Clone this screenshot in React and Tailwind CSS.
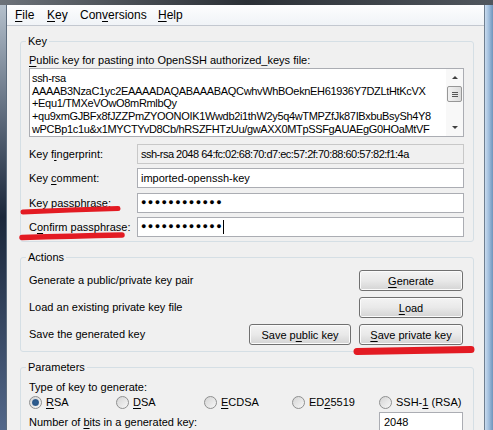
import React from 'react';

const U = ({ children }) => (
  <span className="underline decoration-[1px] underline-offset-[2px]">{children}</span>
);

const Btn = ({ className = '', children }) => (
  <button
    type="button"
    className={`h-[21px] rounded-[3px] border border-[#707070] bg-gradient-to-b from-[#f3f3f3] via-[#e9e9e9] to-[#d4d4d4] shadow-[inset_0_0_0_1px_#fbfbfb] text-[11px] leading-[14px] text-black ${className}`}
  >
    {children}
  </button>
);

const Radio = ({ checked, children }) => (
  <div className="flex items-center gap-[4px] h-[14px]">
    <span className="w-[13px] h-[13px] rounded-full border border-[#8e8f8f] bg-gradient-to-br from-[#d4d4d4] to-[#f7f7f7] flex items-center justify-center">
      {checked && (
        <span className="w-[7px] h-[7px] rounded-full bg-[radial-gradient(circle,#2d5f93_0%,#2a5585_55%,#7ea8d4_100%)]" />
      )}
    </span>
    <span>{children}</span>
  </div>
);

const Field = ({ label, children, className = '' }) => (
  <div className="flex items-center h-[20px]">
    <div className="w-[108px] shrink-0 leading-[14px]">{label}</div>
    <div className={`flex-1 h-[20px] border border-[#abadb3] flex items-center pl-[3px] whitespace-nowrap overflow-hidden ${className}`}>
      {children}
    </div>
  </div>
);

const keyLines = [
  'ssh-rsa',
  'AAAAB3NzaC1yc2EAAAADAQABAAABAQCwhvWhBOeknEH61936Y7DZLtHtKcVX',
  '+Equ1/TMXeVOwO8mRmlbQy',
  '+qu9xmGJBFx8fJZZPmZYOONOIK1Wwdb2i1thW2y5q4wTMPZfJk87IBxbuBsySh4Y8',
  'wPCBp1c1u&x1MYCTYvD8Cb/hRSZFHTzUu/gwAXX0MTpSSFgAUAEgG0HOaMtVF',
];

const dots = '\u25CF'.repeat(12);

export default function App() {
  return (
    <div className="relative w-[493px] h-[430px] overflow-hidden bg-[#f0f0f0] text-[11px] text-black font-['Liberation_Sans',Arial,sans-serif]">
      {/* window frame top */}
      <div className="h-[5px] bg-gradient-to-r from-[#6c7279] via-[#2b3036] to-[#50565d]" />
      <div className="flex h-[425px]">
        {/* left frame */}
        <div className="w-[7px] shrink-0 bg-gradient-to-b from-[#b4c0cc] via-[#1b273a] to-[#53688a] border-r border-[#5d6c7d]" />

        <div className="flex-1 flex flex-col min-w-0">
          {/* menu bar */}
          <div className="h-[21px] shrink-0 flex items-center pl-[8px] text-[12px] bg-gradient-to-b from-[#fdfdfe] to-[#f0f3f7] border-b border-[#c3c8d0]">
            <span className="w-[32px]"><U>F</U>ile</span>
            <span className="w-[33px]"><U>K</U>ey</span>
            <span className="w-[78px]">Con<U>v</U>ersions</span>
            <span><U>H</U>elp</span>
          </div>

          {/* Key group */}
          <fieldset className="ml-[13px] mr-[10px] mt-[8px] border border-[#d5dfe5] rounded-[3px] pl-[8px] pr-[9px] pb-[4px]">
            <legend className="-ml-[3px] px-[2px] leading-[14px]">Key</legend>
            <div className="mt-[5px] leading-[14px]">
              <U>P</U>ublic key for pasting into OpenSSH authorized_keys file:
            </div>
            <div className="mt-[1px] h-[69px] border border-[#abadb3] bg-white flex">
              <div className="flex-1 pl-[2px] pt-[3px] leading-[12.7px] tracking-[-0.33px] overflow-hidden whitespace-nowrap">
                {keyLines.map((l) => (
                  <div key={l}>{l}</div>
                ))}
              </div>
              {/* scrollbar */}
              <div className="w-[17px] shrink-0 flex flex-col items-center bg-[#f8f8f8]">
                <div className="h-[17px] w-full flex items-center justify-center">
                  <span className="w-0 h-0 border-l-[3px] border-r-[3px] border-b-[3px] border-l-transparent border-r-transparent border-b-[#404040]" />
                </div>
                <div className="w-[15px] h-[16px] rounded-[2px] border border-[#979797] bg-gradient-to-r from-[#f1f1f1] to-[#dcdcdc] flex flex-col items-center justify-center gap-[1px]">
                  <span className="w-[6px] h-[1px] bg-[#555]" />
                  <span className="w-[6px] h-[1px] bg-[#555]" />
                  <span className="w-[6px] h-[1px] bg-[#555]" />
                </div>
                <div className="flex-1" />
                <div className="h-[17px] w-full flex items-center justify-center">
                  <span className="w-0 h-0 border-l-[3px] border-r-[3px] border-t-[3px] border-l-transparent border-r-transparent border-t-[#404040]" />
                </div>
              </div>
            </div>

            <div className="mt-[7px]">
              <Field label={<>Key f<U>i</U>ngerprint:</>} className="bg-[#f0f0f0] border-[#c8c8c8] tracking-[-0.5px]">
                ssh-rsa 2048 64:fc:02:68:70:d7:ec:57:2f:70:88:60:57:82:f1:4a
              </Field>
            </div>
            <div className="mt-[4px]">
              <Field label={<>Key <U>c</U>omment:</>} className="bg-white">
                imported-openssh-key
              </Field>
            </div>
            <div className="mt-[5px]">
              <Field label={<>Key p<U>a</U>ssphrase:</>} className="bg-white text-[9px] tracking-[1.4px]">
                {dots}
              </Field>
            </div>
            <div className="mt-[4px]">
              <Field label={<>C<U>o</U>nfirm passphrase:</>} className="bg-white border-[#5c7fa3] text-[9px] tracking-[1.4px]">
                {dots}
                <span className="w-[1px] h-[14px] bg-black" />
              </Field>
            </div>
          </fieldset>

          {/* Actions group */}
          <fieldset className="ml-[13px] mr-[10px] mt-[8px] border border-[#d5dfe5] rounded-[3px] pl-[8px] pr-[10px] pb-[6px]">
            <legend className="-ml-[3px] px-[2px] leading-[14px]">Actions</legend>
            <div className="mt-[6px] flex items-center justify-between">
              <span>Generate a public/private key pair</span>
              <Btn className="w-[104px]"><U>G</U>enerate</Btn>
            </div>
            <div className="mt-[6px] flex items-center justify-between">
              <span>Load an existing private key file</span>
              <Btn className="w-[104px]"><U>L</U>oad</Btn>
            </div>
            <div className="mt-[6px] flex items-center">
              <span className="flex-1">Save the generated key</span>
              <Btn className="w-[102px]">Save p<U>u</U>blic key</Btn>
              <Btn className="w-[104px] ml-[8px]"><U>S</U>ave private key</Btn>
            </div>
          </fieldset>

          {/* Parameters group */}
          <fieldset className="ml-[13px] mr-[10px] mt-[8px] border border-[#d5dfe5] rounded-[3px] pl-[8px] pr-[10px] pb-[6px]">
            <legend className="-ml-[3px] px-[2px] leading-[14px]">Parameters</legend>
            <div className="mt-[6px] leading-[14px]">Type of key to generate:</div>
            <div className="mt-[1px] grid grid-cols-[87px_88px_88px_87px_1fr]">
              <Radio checked><U>R</U>SA</Radio>
              <Radio><U>D</U>SA</Radio>
              <Radio><U>E</U>CDSA</Radio>
              <Radio>ED<U>2</U>5519</Radio>
              <Radio>SSH-<U>1</U> (RSA)</Radio>
            </div>
            <div className="mt-[3px] flex items-center h-[20px]">
              <span className="flex-1">Number of <U>b</U>its in a generated key:</span>
              <div className="w-[84px] h-[20px] border border-[#abadb3] bg-white pl-[4px] flex items-center">2048</div>
            </div>
          </fieldset>
        </div>

        {/* right frame */}
        <div className="w-[9px] shrink-0 border-l border-[#6f7f90] bg-gradient-to-r from-[#c9dbee] via-[#9fbddc] to-[#6f94bb]" />
      </div>

      {/* red hand-drawn marks */}
      <svg className="absolute inset-0 pointer-events-none" width="493" height="430" viewBox="0 0 493 430">
        <path d="M23 212 Q70 209.5 118 208.5" stroke="#e31b23" strokeWidth="5" strokeLinecap="round" fill="none" />
        <path d="M22 237.5 Q70 236 122 235" stroke="#e31b23" strokeWidth="5.5" strokeLinecap="round" fill="none" />
        <path d="M357 351.5 Q415 350.5 471 349.5" stroke="#e31b23" strokeWidth="7" strokeLinecap="round" fill="none" />
      </svg>
    </div>
  );
}
